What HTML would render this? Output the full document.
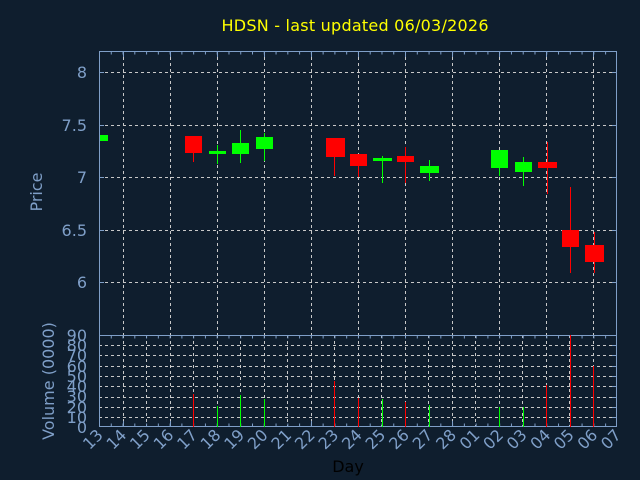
<!DOCTYPE html>
<html><head><meta charset="utf-8"><style>
html,body{margin:0;padding:0;background:#0f1e2e;}
svg{display:block;}
text{font-family:"DejaVu Sans","Liberation Sans",sans-serif;}
</style></head><body>
<svg width="640" height="480" viewBox="0 0 640 480" xmlns="http://www.w3.org/2000/svg">
<rect width="640" height="480" fill="#0f1e2e"/>
<text x="355" y="31" fill="#ffff00" font-size="16" text-anchor="middle" textLength="267">HDSN - last updated 06/03/2026</text>

<!-- price grid -->
<g stroke="#c8c8c8" stroke-width="1" stroke-dasharray="3 3" fill="none">
<line x1="99" y1="72.5" x2="617" y2="72.5"/>
<line x1="99" y1="125.5" x2="617" y2="125.5"/>
<line x1="99" y1="177.5" x2="617" y2="177.5"/>
<line x1="99" y1="230.5" x2="617" y2="230.5"/>
<line x1="99" y1="282.5" x2="617" y2="282.5"/>
<line x1="123.5" y1="51" x2="123.5" y2="335"/>
<line x1="170.5" y1="51" x2="170.5" y2="335"/>
<line x1="217.5" y1="51" x2="217.5" y2="335"/>
<line x1="264.5" y1="51" x2="264.5" y2="335"/>
<line x1="311.5" y1="51" x2="311.5" y2="335"/>
<line x1="358.5" y1="51" x2="358.5" y2="335"/>
<line x1="405.5" y1="51" x2="405.5" y2="335"/>
<line x1="452.5" y1="51" x2="452.5" y2="335"/>
<line x1="499.5" y1="51" x2="499.5" y2="335"/>
<line x1="546.5" y1="51" x2="546.5" y2="335"/>
<line x1="593.5" y1="51" x2="593.5" y2="335"/>
</g>
<!-- volume grid -->
<g stroke="#c8c8c8" stroke-width="1" stroke-dasharray="3 3" fill="none">
<line x1="99" y1="345.5" x2="617" y2="345.5"/>
<line x1="99" y1="355.5" x2="617" y2="355.5"/>
<line x1="99" y1="366.5" x2="617" y2="366.5"/>
<line x1="99" y1="376.5" x2="617" y2="376.5"/>
<line x1="99" y1="386.5" x2="617" y2="386.5"/>
<line x1="99" y1="397.5" x2="617" y2="397.5"/>
<line x1="99" y1="407.5" x2="617" y2="407.5"/>
<line x1="99" y1="417.5" x2="617" y2="417.5"/>
<line x1="123.5" y1="335" x2="123.5" y2="427"/><line x1="146.5" y1="335" x2="146.5" y2="427"/>
<line x1="170.5" y1="335" x2="170.5" y2="427"/><line x1="193.5" y1="335" x2="193.5" y2="427"/>
<line x1="217.5" y1="335" x2="217.5" y2="427"/><line x1="240.5" y1="335" x2="240.5" y2="427"/>
<line x1="264.5" y1="335" x2="264.5" y2="427"/><line x1="287.5" y1="335" x2="287.5" y2="427"/>
<line x1="311.5" y1="335" x2="311.5" y2="427"/><line x1="334.5" y1="335" x2="334.5" y2="427"/>
<line x1="358.5" y1="335" x2="358.5" y2="427"/><line x1="381.5" y1="335" x2="381.5" y2="427"/>
<line x1="405.5" y1="335" x2="405.5" y2="427"/><line x1="428.5" y1="335" x2="428.5" y2="427"/>
<line x1="452.5" y1="335" x2="452.5" y2="427"/><line x1="475.5" y1="335" x2="475.5" y2="427"/>
<line x1="499.5" y1="335" x2="499.5" y2="427"/><line x1="522.5" y1="335" x2="522.5" y2="427"/>
<line x1="546.5" y1="335" x2="546.5" y2="427"/><line x1="569.5" y1="335" x2="569.5" y2="427"/>
<line x1="593.5" y1="335" x2="593.5" y2="427"/>
</g>

<!-- borders & ticks -->
<g stroke="#7f9fc8" fill="none">
<rect x="99.5" y="51.5" width="517" height="375"/>
<line x1="99" y1="335.5" x2="617" y2="335.5"/>
<line x1="99" y1="53" x2="617" y2="53" stroke-width="3" stroke-dasharray="1 10.77"/>
<line x1="99" y1="337" x2="617" y2="337" stroke-width="3" stroke-dasharray="1 10.77"/>
<line x1="99" y1="425" x2="617" y2="425" stroke-width="3" stroke-dasharray="1 10.77"/>
<line x1="123.5" y1="51" x2="123.5" y2="57"/><line x1="170.5" y1="51" x2="170.5" y2="57"/><line x1="217.5" y1="51" x2="217.5" y2="57"/><line x1="264.5" y1="51" x2="264.5" y2="57"/><line x1="311.5" y1="51" x2="311.5" y2="57"/><line x1="358.5" y1="51" x2="358.5" y2="57"/><line x1="405.5" y1="51" x2="405.5" y2="57"/><line x1="452.5" y1="51" x2="452.5" y2="57"/><line x1="499.5" y1="51" x2="499.5" y2="57"/><line x1="546.5" y1="51" x2="546.5" y2="57"/><line x1="593.5" y1="51" x2="593.5" y2="57"/>
<line x1="123.5" y1="421" x2="123.5" y2="427"/><line x1="170.5" y1="421" x2="170.5" y2="427"/><line x1="217.5" y1="421" x2="217.5" y2="427"/><line x1="264.5" y1="421" x2="264.5" y2="427"/><line x1="311.5" y1="421" x2="311.5" y2="427"/><line x1="358.5" y1="421" x2="358.5" y2="427"/><line x1="405.5" y1="421" x2="405.5" y2="427"/><line x1="452.5" y1="421" x2="452.5" y2="427"/><line x1="499.5" y1="421" x2="499.5" y2="427"/><line x1="546.5" y1="421" x2="546.5" y2="427"/><line x1="593.5" y1="421" x2="593.5" y2="427"/>
<line x1="99" y1="72.5" x2="104" y2="72.5"/><line x1="99" y1="125.5" x2="104" y2="125.5"/><line x1="99" y1="177.5" x2="104" y2="177.5"/><line x1="99" y1="230.5" x2="104" y2="230.5"/><line x1="99" y1="282.5" x2="104" y2="282.5"/>
<line x1="612" y1="72.5" x2="617" y2="72.5"/><line x1="612" y1="125.5" x2="617" y2="125.5"/><line x1="612" y1="177.5" x2="617" y2="177.5"/><line x1="612" y1="230.5" x2="617" y2="230.5"/><line x1="612" y1="282.5" x2="617" y2="282.5"/>
<line x1="612" y1="345.5" x2="617" y2="345.5"/><line x1="612" y1="355.5" x2="617" y2="355.5"/><line x1="612" y1="366.5" x2="617" y2="366.5"/><line x1="612" y1="376.5" x2="617" y2="376.5"/><line x1="612" y1="386.5" x2="617" y2="386.5"/><line x1="612" y1="397.5" x2="617" y2="397.5"/><line x1="612" y1="407.5" x2="617" y2="407.5"/><line x1="612" y1="417.5" x2="617" y2="417.5"/>
</g>

<!-- candles -->
<g stroke-width="1">
<rect x="100" y="135" width="8" height="6" fill="#00ff00"/>
<line x1="193.5" y1="153" x2="193.5" y2="162" stroke="#ff0000"/><rect x="185" y="136" width="17" height="17" fill="#ff0000"/>
<line x1="217.5" y1="145" x2="217.5" y2="164" stroke="#00ff00"/><rect x="209" y="151" width="17" height="3" fill="#00ff00"/>
<line x1="240.5" y1="130" x2="240.5" y2="163" stroke="#00ff00"/><rect x="232" y="143" width="17" height="11" fill="#00ff00"/>
<line x1="264.5" y1="133" x2="264.5" y2="161" stroke="#00ff00"/><rect x="256" y="137" width="17" height="12" fill="#00ff00"/>
<line x1="334.5" y1="150" x2="334.5" y2="176" stroke="#ff0000"/><rect x="326" y="138" width="19" height="19" fill="#ff0000"/>
<line x1="358.5" y1="160" x2="358.5" y2="177" stroke="#ff0000"/><rect x="350" y="154" width="17" height="12" fill="#ff0000"/>
<line x1="382.5" y1="156" x2="382.5" y2="183" stroke="#00ff00"/><rect x="373" y="158" width="19" height="3" fill="#00ff00"/>
<line x1="405.5" y1="147" x2="405.5" y2="183" stroke="#ff0000"/><rect x="397" y="156" width="17" height="6" fill="#ff0000"/>
<line x1="429.5" y1="160" x2="429.5" y2="181" stroke="#00ff00"/><rect x="420" y="166" width="19" height="7" fill="#00ff00"/>
<line x1="499.5" y1="160" x2="499.5" y2="176" stroke="#00ff00"/><rect x="491" y="150" width="17" height="18" fill="#00ff00"/>
<line x1="523.5" y1="157" x2="523.5" y2="186" stroke="#00ff00"/><rect x="515" y="162" width="17" height="10" fill="#00ff00"/>
<line x1="547.5" y1="142" x2="547.5" y2="194" stroke="#ff0000"/><rect x="538" y="162" width="19" height="6" fill="#ff0000"/>
<line x1="570.5" y1="187" x2="570.5" y2="273" stroke="#ff0000"/><rect x="562" y="230" width="17" height="17" fill="#ff0000"/>
<line x1="594.5" y1="232" x2="594.5" y2="273" stroke="#ff0000"/><rect x="585" y="245" width="19" height="17" fill="#ff0000"/>
</g>

<!-- volume bars -->
<g stroke-width="1">
<line x1="193.5" y1="394" x2="193.5" y2="427" stroke="#ff0000"/>
<line x1="217.5" y1="406" x2="217.5" y2="427" stroke="#00ff00"/>
<line x1="240.5" y1="395" x2="240.5" y2="427" stroke="#00ff00"/>
<line x1="264.5" y1="399" x2="264.5" y2="427" stroke="#00ff00"/>
<line x1="334.5" y1="381" x2="334.5" y2="427" stroke="#ff0000"/>
<line x1="358.5" y1="398" x2="358.5" y2="427" stroke="#ff0000"/>
<line x1="382.5" y1="399" x2="382.5" y2="427" stroke="#00ff00"/>
<line x1="405.5" y1="402" x2="405.5" y2="427" stroke="#ff0000"/>
<line x1="429.5" y1="405" x2="429.5" y2="427" stroke="#00ff00"/>
<line x1="499.5" y1="407" x2="499.5" y2="427" stroke="#00ff00"/>
<line x1="523.5" y1="407" x2="523.5" y2="427" stroke="#00ff00"/>
<line x1="546.5" y1="385" x2="546.5" y2="427" stroke="#ff0000"/>
<line x1="570.5" y1="335" x2="570.5" y2="427" stroke="#ff0000"/>
<line x1="593.5" y1="366" x2="593.5" y2="427" stroke="#ff0000"/>
</g>

<!-- y labels -->
<g fill="#7f9fc8" font-size="16" text-anchor="end">
<text x="87" y="78">8</text>
<text x="87" y="131">7.5</text>
<text x="87" y="183">7</text>
<text x="87" y="236">6.5</text>
<text x="87" y="288">6</text>
<text x="87" y="341">90</text>
<text x="87" y="351">80</text>
<text x="87" y="361">70</text>
<text x="87" y="372">60</text>
<text x="87" y="382">50</text>
<text x="87" y="392">40</text>
<text x="87" y="402">30</text>
<text x="87" y="413">20</text>
<text x="87" y="423">10</text>
<text x="87" y="433">0</text>
</g>
<text transform="translate(42,192) rotate(-90)" fill="#7f9fc8" font-size="16" text-anchor="middle">Price</text>
<text transform="translate(54,381) rotate(-90)" fill="#7f9fc8" font-size="16" text-anchor="middle">Volume (0000)</text>

<!-- x labels -->
<g fill="#7f9fc8" font-size="16" text-anchor="end">
<text transform="translate(104,436) rotate(-45)">13</text>
<text transform="translate(127.5,436) rotate(-45)">14</text>
<text transform="translate(151,436) rotate(-45)">15</text>
<text transform="translate(174.6,436) rotate(-45)">16</text>
<text transform="translate(198.2,436) rotate(-45)">17</text>
<text transform="translate(221.7,436) rotate(-45)">18</text>
<text transform="translate(245.3,436) rotate(-45)">19</text>
<text transform="translate(268.8,436) rotate(-45)">20</text>
<text transform="translate(292.4,436) rotate(-45)">21</text>
<text transform="translate(315.9,436) rotate(-45)">22</text>
<text transform="translate(339.5,436) rotate(-45)">23</text>
<text transform="translate(363,436) rotate(-45)">24</text>
<text transform="translate(386.5,436) rotate(-45)">25</text>
<text transform="translate(410.1,436) rotate(-45)">26</text>
<text transform="translate(433.6,436) rotate(-45)">27</text>
<text transform="translate(457.2,436) rotate(-45)">28</text>
<text transform="translate(480.7,436) rotate(-45)">01</text>
<text transform="translate(504.3,436) rotate(-45)">02</text>
<text transform="translate(527.8,436) rotate(-45)">03</text>
<text transform="translate(551.4,436) rotate(-45)">04</text>
<text transform="translate(574.9,436) rotate(-45)">05</text>
<text transform="translate(598.5,436) rotate(-45)">06</text>
<text transform="translate(622,436) rotate(-45)">07</text>
</g>
<text x="348" y="472" fill="#000000" font-size="16" text-anchor="middle">Day</text>
</svg>
</body></html>
